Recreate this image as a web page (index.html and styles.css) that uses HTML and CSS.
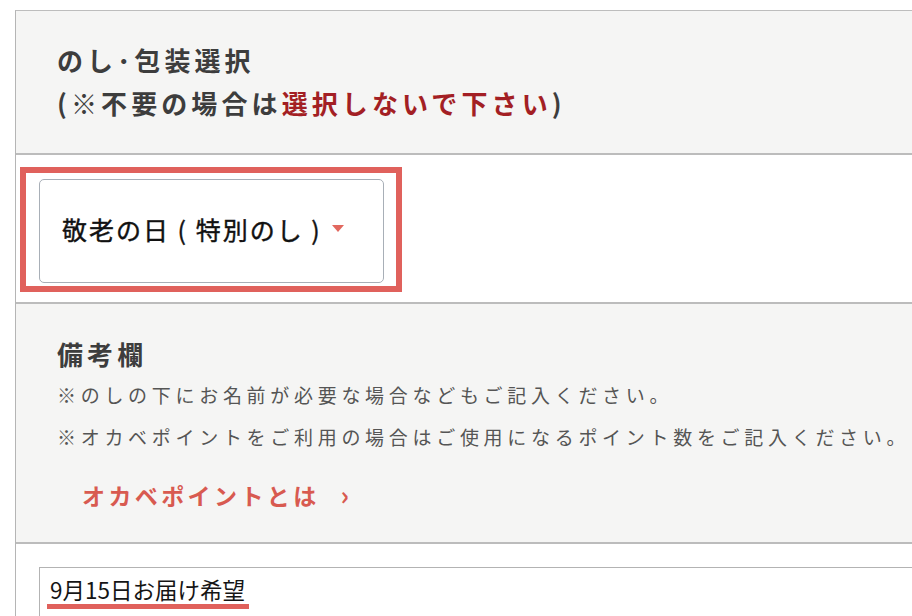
FILE: index.html
```html
<!DOCTYPE html>
<html lang="ja">
<head>
<meta charset="utf-8">
<title>のし・包装選択</title>
<link rel="stylesheet" href="styles.css">
</head>
<body>
<div class="panel">
  <div class="sec sec-head">
    <p class="title">のし･包装選択</p>
    <p class="title">(※不要の場合は<span class="warn">選択しないで下さい</span>)</p>
  </div>
  <div class="sec sec-select">
    <div class="mark">
      <div class="select">
        <span class="select-text">敬老の日 ( 特別のし )</span>
        <span class="caret"></span>
      </div>
    </div>
  </div>
  <div class="sec sec-notes">
    <p class="title">備考欄</p>
    <p class="note">※のしの下にお名前が必要な場合などもご記入ください。</p>
    <p class="note">※オカベポイントをご利用の場合はご使用になるポイント数をご記入ください。</p>
    <a class="link" href="#">オカベポイントとは<span class="chev">›</span></a>
  </div>
  <div class="sec sec-input">
    <div class="input"><span class="typed">9月15日お届け希望</span></div>
  </div>
</div>
</body>
</html>
```

FILE: styles.css
```css
html, body {
  margin: 0;
  padding: 0;
  background: #ffffff;
  overflow: hidden;
}
body {
  font-family: "Noto Sans CJK JP", "Noto Sans", sans-serif;
  color: #333;
}
p { margin: 0; }

.panel {
  margin: 10px 0 0 15px;
  border-top: 1px solid #bdbdbd;
  border-left: 1px solid #b5b5b5;
}

.sec {
  border-bottom: 2px solid #bcbcbc;
}

.sec-head {
  background: #f5f5f4;
  padding: 27px 0 29px 41px;
}

.title {
  font-size: 26px;
  font-weight: 700;
  line-height: 43px;
  letter-spacing: 4.1px;
  color: #3d3d3d;
  white-space: nowrap;
}
.warn { color: #a31f24; }

.sec-select {
  background: #ffffff;
  padding: 12px 0 10px 4px;
}
.mark {
  width: 382px;
  box-sizing: border-box;
  border: 6px solid #e0615c;
  padding: 6px 12px 3px 13px;
}
.select {
  height: 104px;
  box-sizing: border-box;
  border: 1px solid #a8afb7;
  border-radius: 5px;
  display: flex;
  align-items: center;
  padding: 0 0 5px 22px;
}
.select-text {
  font-size: 25px;
  line-height: 32px;
  letter-spacing: 2px;
  color: #111;
  -webkit-text-stroke: 0.4px #111;
  white-space: nowrap;
}
.caret {
  margin-left: 10px;
  width: 0;
  height: 0;
  border-left: 6.5px solid transparent;
  border-right: 6.5px solid transparent;
  border-top: 7.5px solid #e2685f;
}

.sec-notes {
  background: #f5f5f4;
  padding: 32px 0 29px 41px;
}
.sec-notes .title {
  line-height: 36px;
  margin-bottom: 2px;
}
.note {
  font-size: 19px;
  line-height: 42px;
  letter-spacing: 4.7px;
  color: #555;
  white-space: nowrap;
}
.link {
  display: block;
  margin: 18px 0 0 25px;
  font-size: 23px;
  font-weight: 700;
  line-height: 36px;
  letter-spacing: 3.4px;
  color: #d85a50;
  text-decoration: none;
  white-space: nowrap;
}
.chev {
  margin-left: 21px;
  font-size: 26px;
  font-weight: 700;
}

.sec-input {
  background: #ffffff;
  border-bottom: none;
  padding: 23px 0 20px 23px;
}
.input {
  border: 1px solid #b3b3b3;
  border-right: none;
  padding: 6px 0 10px 7px;
  height: 60px;
}
.typed {
  display: inline-block;
  padding: 0 4px 0 3px;
  font-size: 22.5px;
  line-height: 30px;
  color: #151515;
  border-bottom: 5px solid #e0615c;
  white-space: nowrap;
}
```
